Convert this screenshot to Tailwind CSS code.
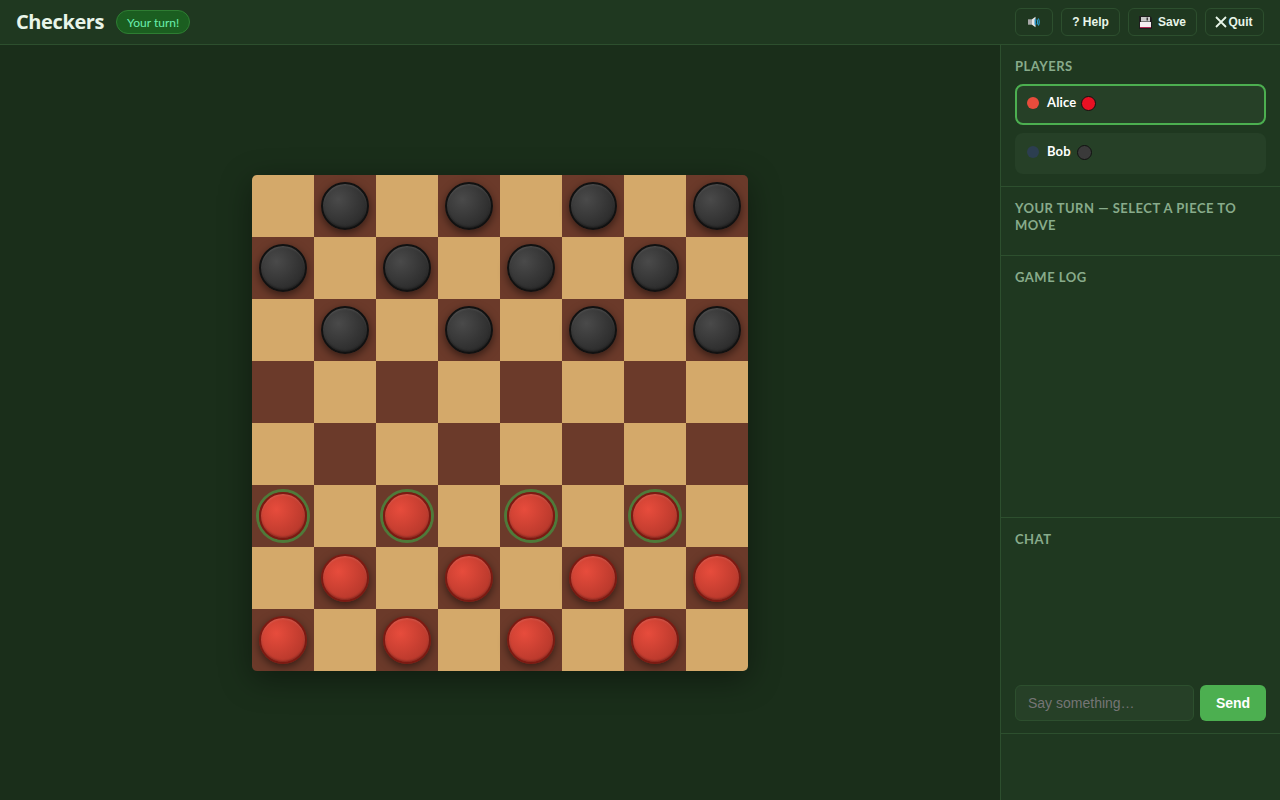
<!DOCTYPE html>
<html>
<head>
<meta charset="utf-8">
<script src="https://cdn.jsdelivr.net/npm/@tailwindcss/browser@4"></script>
</head>
<body class="w-[1280px] h-[800px] overflow-hidden bg-[#1a2e1a] font-['Lato',sans-serif]">
<header class="h-[45px] bg-[#1f3820] border-b border-[#2d4f2e] flex items-center justify-between pl-4 pr-4">
  <div class="flex items-center gap-3">
    <h1 class="font-['Open_Sans',sans-serif] text-[20px] font-bold leading-[28px] text-[#e8f5e9] tracking-[-0.4px]">Checkers</h1>
    <span class="h-6 px-[10px] rounded-full bg-[#1b5e20] border border-[#2e7d32] text-[#69f0ae] text-xs leading-[23px]">Your turn!</span>
  </div>
  <div class="flex items-center gap-2 font-['Liberation_Sans',sans-serif] text-xs font-bold text-[#e8f5e9]">
    <button class="h-7 w-[38px] rounded-md border border-[#2d4f2e] flex items-center justify-center">
      <svg width="12" height="12" viewBox="0 0 12 12"><path d="M0 3.300h4v5.400H0z" fill="#a8a8a8"/><path d="M4 3.300L7.500 0.700v10.600L4 8.700z" fill="#e6e6e6"/><path d="M6.500 3.500L8 2.500v7l-1.500-1z" fill="#2a8fc0"/><path d="M9 3.500q1.300 2.500 0 5M10.300 2.500q2 3.500 0 7" fill="none" stroke="#2a9fd0" stroke-width="1.100"/></svg>
    </button>
    <button class="h-7 w-[59px] rounded-md border border-[#2d4f2e]">? Help</button>
    <button class="h-7 w-[69px] rounded-md border border-[#2d4f2e] flex items-center justify-center gap-[6px]">
      <svg width="13" height="13" viewBox="0 0 13 13"><path d="M0 0h11l2 2v11H0z" fill="#1e1e1e"/><rect x="1" y="6" width="11" height="5.500" fill="#f5eef1"/><rect x="1" y="11" width="11" height="1" fill="#b02a55"/><rect x="2" y="1" width="9" height="4.500" fill="#c8c8c8"/><rect x="7.500" y="1.500" width="1.500" height="3" fill="#3a3a3a"/></svg>
      <span>Save</span>
    </button>
    <button class="h-7 w-[59px] pr-[2px] rounded-md border border-[#2d4f2e] flex items-center justify-center gap-[2px]">
      <svg width="12" height="12" viewBox="0 0 12 12"><path d="M1 1l10 10M11 1L1 11" stroke="#e8f5e9" stroke-width="1.800" fill="none"/></svg>
      <span>Quit</span>
    </button>
  </div>
</header>
<div class="flex h-[755px]">
  <main class="w-[1000px] flex items-center justify-center">
    <div class="w-[496px] h-[496px] rounded-[5px] overflow-hidden grid grid-cols-8 grid-rows-8 shadow-[0_8px_32px_rgba(0,0,0,0.4)]">
      <div class="bg-[#d4a96a]"></div>
      <div class="bg-[#6b3a2a] flex items-center justify-center"><div class="w-12 h-12 rounded-full border-2 border-[#111] bg-[radial-gradient(circle_at_35%_35%,#4a4a4a,#222)] shadow-[0_3px_8px_rgba(0,0,0,0.5),inset_0_1px_2px_rgba(255,255,255,0.12),inset_0_-1px_2px_rgba(0,0,0,0.4)]"></div></div>
      <div class="bg-[#d4a96a]"></div>
      <div class="bg-[#6b3a2a] flex items-center justify-center"><div class="w-12 h-12 rounded-full border-2 border-[#111] bg-[radial-gradient(circle_at_35%_35%,#4a4a4a,#222)] shadow-[0_3px_8px_rgba(0,0,0,0.5),inset_0_1px_2px_rgba(255,255,255,0.12),inset_0_-1px_2px_rgba(0,0,0,0.4)]"></div></div>
      <div class="bg-[#d4a96a]"></div>
      <div class="bg-[#6b3a2a] flex items-center justify-center"><div class="w-12 h-12 rounded-full border-2 border-[#111] bg-[radial-gradient(circle_at_35%_35%,#4a4a4a,#222)] shadow-[0_3px_8px_rgba(0,0,0,0.5),inset_0_1px_2px_rgba(255,255,255,0.12),inset_0_-1px_2px_rgba(0,0,0,0.4)]"></div></div>
      <div class="bg-[#d4a96a]"></div>
      <div class="bg-[#6b3a2a] flex items-center justify-center"><div class="w-12 h-12 rounded-full border-2 border-[#111] bg-[radial-gradient(circle_at_35%_35%,#4a4a4a,#222)] shadow-[0_3px_8px_rgba(0,0,0,0.5),inset_0_1px_2px_rgba(255,255,255,0.12),inset_0_-1px_2px_rgba(0,0,0,0.4)]"></div></div>

      <div class="bg-[#6b3a2a] flex items-center justify-center"><div class="w-12 h-12 rounded-full border-2 border-[#111] bg-[radial-gradient(circle_at_35%_35%,#4a4a4a,#222)] shadow-[0_3px_8px_rgba(0,0,0,0.5),inset_0_1px_2px_rgba(255,255,255,0.12),inset_0_-1px_2px_rgba(0,0,0,0.4)]"></div></div>
      <div class="bg-[#d4a96a]"></div>
      <div class="bg-[#6b3a2a] flex items-center justify-center"><div class="w-12 h-12 rounded-full border-2 border-[#111] bg-[radial-gradient(circle_at_35%_35%,#4a4a4a,#222)] shadow-[0_3px_8px_rgba(0,0,0,0.5),inset_0_1px_2px_rgba(255,255,255,0.12),inset_0_-1px_2px_rgba(0,0,0,0.4)]"></div></div>
      <div class="bg-[#d4a96a]"></div>
      <div class="bg-[#6b3a2a] flex items-center justify-center"><div class="w-12 h-12 rounded-full border-2 border-[#111] bg-[radial-gradient(circle_at_35%_35%,#4a4a4a,#222)] shadow-[0_3px_8px_rgba(0,0,0,0.5),inset_0_1px_2px_rgba(255,255,255,0.12),inset_0_-1px_2px_rgba(0,0,0,0.4)]"></div></div>
      <div class="bg-[#d4a96a]"></div>
      <div class="bg-[#6b3a2a] flex items-center justify-center"><div class="w-12 h-12 rounded-full border-2 border-[#111] bg-[radial-gradient(circle_at_35%_35%,#4a4a4a,#222)] shadow-[0_3px_8px_rgba(0,0,0,0.5),inset_0_1px_2px_rgba(255,255,255,0.12),inset_0_-1px_2px_rgba(0,0,0,0.4)]"></div></div>
      <div class="bg-[#d4a96a]"></div>

      <div class="bg-[#d4a96a]"></div>
      <div class="bg-[#6b3a2a] flex items-center justify-center"><div class="w-12 h-12 rounded-full border-2 border-[#111] bg-[radial-gradient(circle_at_35%_35%,#4a4a4a,#222)] shadow-[0_3px_8px_rgba(0,0,0,0.5),inset_0_1px_2px_rgba(255,255,255,0.12),inset_0_-1px_2px_rgba(0,0,0,0.4)]"></div></div>
      <div class="bg-[#d4a96a]"></div>
      <div class="bg-[#6b3a2a] flex items-center justify-center"><div class="w-12 h-12 rounded-full border-2 border-[#111] bg-[radial-gradient(circle_at_35%_35%,#4a4a4a,#222)] shadow-[0_3px_8px_rgba(0,0,0,0.5),inset_0_1px_2px_rgba(255,255,255,0.12),inset_0_-1px_2px_rgba(0,0,0,0.4)]"></div></div>
      <div class="bg-[#d4a96a]"></div>
      <div class="bg-[#6b3a2a] flex items-center justify-center"><div class="w-12 h-12 rounded-full border-2 border-[#111] bg-[radial-gradient(circle_at_35%_35%,#4a4a4a,#222)] shadow-[0_3px_8px_rgba(0,0,0,0.5),inset_0_1px_2px_rgba(255,255,255,0.12),inset_0_-1px_2px_rgba(0,0,0,0.4)]"></div></div>
      <div class="bg-[#d4a96a]"></div>
      <div class="bg-[#6b3a2a] flex items-center justify-center"><div class="w-12 h-12 rounded-full border-2 border-[#111] bg-[radial-gradient(circle_at_35%_35%,#4a4a4a,#222)] shadow-[0_3px_8px_rgba(0,0,0,0.5),inset_0_1px_2px_rgba(255,255,255,0.12),inset_0_-1px_2px_rgba(0,0,0,0.4)]"></div></div>

      <div class="bg-[#6b3a2a]"></div><div class="bg-[#d4a96a]"></div><div class="bg-[#6b3a2a]"></div><div class="bg-[#d4a96a]"></div><div class="bg-[#6b3a2a]"></div><div class="bg-[#d4a96a]"></div><div class="bg-[#6b3a2a]"></div><div class="bg-[#d4a96a]"></div>
      <div class="bg-[#d4a96a]"></div><div class="bg-[#6b3a2a]"></div><div class="bg-[#d4a96a]"></div><div class="bg-[#6b3a2a]"></div><div class="bg-[#d4a96a]"></div><div class="bg-[#6b3a2a]"></div><div class="bg-[#d4a96a]"></div><div class="bg-[#6b3a2a]"></div>

      <div class="bg-[#6b3a2a] flex items-center justify-center"><div class="w-12 h-12 rounded-full border-2 border-[#7b1a12] bg-[radial-gradient(circle_at_35%_35%,#e74c3c,#a93226)] shadow-[0_0_0_3px_#4f7a3a,inset_0_1px_2px_rgba(255,255,255,0.15),inset_0_-1px_2px_rgba(0,0,0,0.3)]"></div></div>
      <div class="bg-[#d4a96a]"></div>
      <div class="bg-[#6b3a2a] flex items-center justify-center"><div class="w-12 h-12 rounded-full border-2 border-[#7b1a12] bg-[radial-gradient(circle_at_35%_35%,#e74c3c,#a93226)] shadow-[0_0_0_3px_#4f7a3a,inset_0_1px_2px_rgba(255,255,255,0.15),inset_0_-1px_2px_rgba(0,0,0,0.3)]"></div></div>
      <div class="bg-[#d4a96a]"></div>
      <div class="bg-[#6b3a2a] flex items-center justify-center"><div class="w-12 h-12 rounded-full border-2 border-[#7b1a12] bg-[radial-gradient(circle_at_35%_35%,#e74c3c,#a93226)] shadow-[0_0_0_3px_#4f7a3a,inset_0_1px_2px_rgba(255,255,255,0.15),inset_0_-1px_2px_rgba(0,0,0,0.3)]"></div></div>
      <div class="bg-[#d4a96a]"></div>
      <div class="bg-[#6b3a2a] flex items-center justify-center"><div class="w-12 h-12 rounded-full border-2 border-[#7b1a12] bg-[radial-gradient(circle_at_35%_35%,#e74c3c,#a93226)] shadow-[0_0_0_3px_#4f7a3a,inset_0_1px_2px_rgba(255,255,255,0.15),inset_0_-1px_2px_rgba(0,0,0,0.3)]"></div></div>
      <div class="bg-[#d4a96a]"></div>

      <div class="bg-[#d4a96a]"></div>
      <div class="bg-[#6b3a2a] flex items-center justify-center"><div class="w-12 h-12 rounded-full border-2 border-[#7b1a12] bg-[radial-gradient(circle_at_35%_35%,#e74c3c,#a93226)] shadow-[0_3px_8px_rgba(0,0,0,0.5),inset_0_1px_2px_rgba(255,255,255,0.15),inset_0_-1px_2px_rgba(0,0,0,0.3)]"></div></div>
      <div class="bg-[#d4a96a]"></div>
      <div class="bg-[#6b3a2a] flex items-center justify-center"><div class="w-12 h-12 rounded-full border-2 border-[#7b1a12] bg-[radial-gradient(circle_at_35%_35%,#e74c3c,#a93226)] shadow-[0_3px_8px_rgba(0,0,0,0.5),inset_0_1px_2px_rgba(255,255,255,0.15),inset_0_-1px_2px_rgba(0,0,0,0.3)]"></div></div>
      <div class="bg-[#d4a96a]"></div>
      <div class="bg-[#6b3a2a] flex items-center justify-center"><div class="w-12 h-12 rounded-full border-2 border-[#7b1a12] bg-[radial-gradient(circle_at_35%_35%,#e74c3c,#a93226)] shadow-[0_3px_8px_rgba(0,0,0,0.5),inset_0_1px_2px_rgba(255,255,255,0.15),inset_0_-1px_2px_rgba(0,0,0,0.3)]"></div></div>
      <div class="bg-[#d4a96a]"></div>
      <div class="bg-[#6b3a2a] flex items-center justify-center"><div class="w-12 h-12 rounded-full border-2 border-[#7b1a12] bg-[radial-gradient(circle_at_35%_35%,#e74c3c,#a93226)] shadow-[0_3px_8px_rgba(0,0,0,0.5),inset_0_1px_2px_rgba(255,255,255,0.15),inset_0_-1px_2px_rgba(0,0,0,0.3)]"></div></div>

      <div class="bg-[#6b3a2a] flex items-center justify-center"><div class="w-12 h-12 rounded-full border-2 border-[#7b1a12] bg-[radial-gradient(circle_at_35%_35%,#e74c3c,#a93226)] shadow-[0_3px_8px_rgba(0,0,0,0.5),inset_0_1px_2px_rgba(255,255,255,0.15),inset_0_-1px_2px_rgba(0,0,0,0.3)]"></div></div>
      <div class="bg-[#d4a96a]"></div>
      <div class="bg-[#6b3a2a] flex items-center justify-center"><div class="w-12 h-12 rounded-full border-2 border-[#7b1a12] bg-[radial-gradient(circle_at_35%_35%,#e74c3c,#a93226)] shadow-[0_3px_8px_rgba(0,0,0,0.5),inset_0_1px_2px_rgba(255,255,255,0.15),inset_0_-1px_2px_rgba(0,0,0,0.3)]"></div></div>
      <div class="bg-[#d4a96a]"></div>
      <div class="bg-[#6b3a2a] flex items-center justify-center"><div class="w-12 h-12 rounded-full border-2 border-[#7b1a12] bg-[radial-gradient(circle_at_35%_35%,#e74c3c,#a93226)] shadow-[0_3px_8px_rgba(0,0,0,0.5),inset_0_1px_2px_rgba(255,255,255,0.15),inset_0_-1px_2px_rgba(0,0,0,0.3)]"></div></div>
      <div class="bg-[#d4a96a]"></div>
      <div class="bg-[#6b3a2a] flex items-center justify-center"><div class="w-12 h-12 rounded-full border-2 border-[#7b1a12] bg-[radial-gradient(circle_at_35%_35%,#e74c3c,#a93226)] shadow-[0_3px_8px_rgba(0,0,0,0.5),inset_0_1px_2px_rgba(255,255,255,0.15),inset_0_-1px_2px_rgba(0,0,0,0.3)]"></div></div>
      <div class="bg-[#d4a96a]"></div>
    </div>
  </main>
  <aside class="w-[280px] bg-[#1f3820] border-l border-[#2d4f2e] flex flex-col">
    <section class="h-[142px] border-b border-[#2d4f2e] pt-3 px-[14px]">
      <h2 class="text-[13px] font-bold leading-[18px] uppercase tracking-[0.5px] text-[#88ab8b]">Players</h2>
      <div class="mt-[9px] h-[41px] rounded-lg border-2 border-[#4caf50] bg-[#264027] flex items-center gap-[8px] pl-[10px] pb-[3px] text-[13px] font-bold tracking-[0.15px] text-white">
        <span class="w-3 h-3 rounded-full bg-[#e74c3c]"></span>
        <span>Alice</span>
        <span class="-ml-[3px] w-[15px] h-[15px] rounded-full border border-[#111] bg-[#e81123]"></span>
      </div>
      <div class="mt-2 h-[41px] rounded-lg border-2 border-transparent bg-[#264027] flex items-center gap-[8px] pl-[10px] pb-[3px] text-[13px] font-bold tracking-[0.15px] text-white">
        <span class="w-3 h-3 rounded-full bg-[#2c3e50]"></span>
        <span>Bob</span>
        <span class="-ml-[2px] w-[15px] h-[15px] rounded-full border border-[#111] bg-[#3a3a3a]"></span>
      </div>
    </section>
    <section class="h-[69px] border-b border-[#2d4f2e] pt-[13px] px-[14px]">
      <h2 class="text-[13px] font-bold leading-[17px] uppercase tracking-[0.5px] text-[#88ab8b]">Your turn — select a piece to move</h2>
    </section>
    <section class="h-[262px] border-b border-[#2d4f2e] pt-3 px-[14px]">
      <h2 class="text-[13px] font-bold leading-[18px] uppercase tracking-[0.5px] text-[#88ab8b]">Game log</h2>
    </section>
    <section class="h-[216px] border-b border-[#2d4f2e] pt-3 px-[14px] flex flex-col">
      <h2 class="text-[13px] font-bold leading-[18px] uppercase tracking-[0.5px] text-[#88ab8b]">Chat</h2>
      <div class="mt-auto mb-3 flex gap-[6px] font-['Liberation_Sans',sans-serif]">
        <input placeholder="Say something…" class="w-[179px] h-9 rounded-md border border-[#2d4f2e] bg-[#264027] px-3 text-sm text-white placeholder:text-[#757575] outline-none">
        <button class="w-[66px] h-9 rounded-md bg-[#4caf50] text-white text-sm font-bold">Send</button>
      </div>
    </section>
  </aside>
</div>
</body>
</html>
